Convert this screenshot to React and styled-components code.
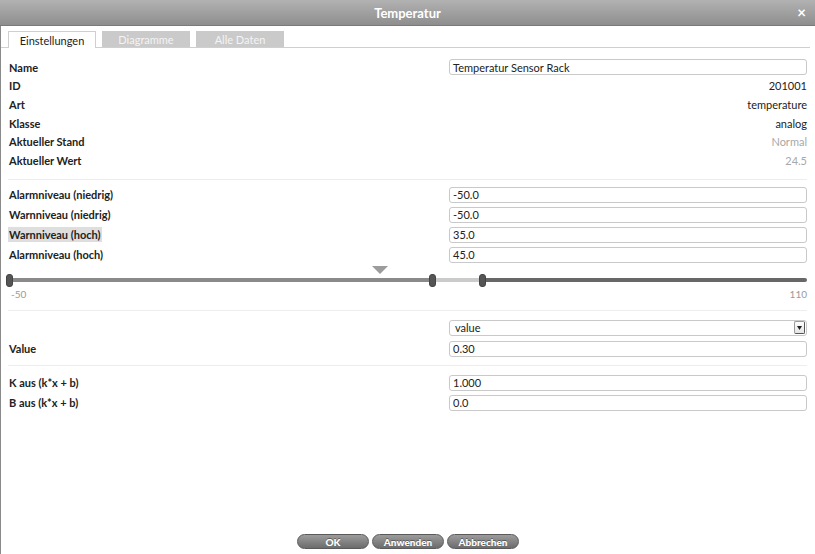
import React from 'react';
import styled, { createGlobalStyle } from 'styled-components';

const GlobalStyle = createGlobalStyle`
  html, body {
    margin: 0;
    padding: 0;
    background: #fff;
  }
  body {
    font-family: Lato, "Open Sans", "Liberation Sans", sans-serif;
    font-size: 11px;
    color: #222;
  }
`;

const Dialog = styled.div`
  width: 815px;
  height: 554px;
  display: flex;
  flex-direction: column;
  background: #fff;
  overflow: hidden;
`;

const TitleBar = styled.div`
  height: 26px;
  flex: none;
  display: flex;
  align-items: center;
  justify-content: center;
  position: relative;
  background: linear-gradient(#b2b2b2, #8e8e8e);
  border-bottom: 1px solid #7a7a7a;
  box-sizing: border-box;
  color: #fff;
  font-weight: 700;
  font-size: 13px;
`;

const Close = styled.span`
  position: absolute;
  right: 9px;
  top: 5px;
  font-size: 15px;
  font-weight: 700;
  line-height: 15px;
`;

const Body = styled.div`
  flex: 1;
  display: flex;
  flex-direction: column;
  border-left: 1px solid #8a8a8a;
`;

const TabBar = styled.div`
  display: flex;
  gap: 6px;
  margin-top: 5px;
  padding-left: 7px;
  margin-right: 5px;
  border-bottom: 1px solid #cfcfcf;
`;

const Tab = styled.div`
  width: 88px;
  display: flex;
  align-items: center;
  justify-content: center;
  font-size: 11px;
  box-sizing: border-box;
  background: ${p => (p.$active ? '#fff' : '#cacaca')};
  color: ${p => (p.$active ? '#222' : '#f4f4f4')};
  border: ${p => (p.$active ? '1px solid #cfcfcf' : 'none')};
  border-bottom: none;
  margin-bottom: ${p => (p.$active ? '-1px' : '0')};
  height: ${p => (p.$active ? '17px' : '16px')};
`;

const Content = styled.div`
  padding: 10px 8px 0 7px;
  display: flex;
  flex-direction: column;
`;

const Row = styled.div`
  display: grid;
  grid-template-columns: 1fr 358px;
  align-items: center;
  height: ${p => p.$h || 18.6}px;
`;

const Label = styled.span`
  font-weight: 700;
  justify-self: start;
  padding: 1px 1px;
  background: ${p => (p.$marked ? '#dedede' : 'transparent')};
`;

const Value = styled.span`
  justify-self: end;
  color: ${p => (p.$muted ? '#a8a8a8' : '#222')};
`;

const Input = styled.div`
  height: 16px;
  box-sizing: border-box;
  border: 1px solid #c9c9c9;
  border-radius: 3px;
  padding: 0 3px;
  display: flex;
  align-items: center;
  font-size: 11px;
  color: #222;
`;

const Select = styled(Input)`
  justify-content: space-between;
  padding: 0 1px 0 5px;
`;

const SelectButton = styled.span`
  width: 11px;
  height: 13px;
  border: 1px solid #9a9a9a;
  border-right-color: #555;
  border-bottom-color: #555;
  border-radius: 2px;
  box-sizing: border-box;
  display: flex;
  align-items: center;
  justify-content: center;
  background: linear-gradient(#fff, #e4e4e4);
`;

const Separator = styled.div`
  height: 1px;
  background: #ededed;
  margin: ${p => p.$m || '9px 0 5px'};
`;

const Slider = styled.div`
  position: relative;
  height: 35px;
`;

const Marker = styled.div`
  position: absolute;
  top: 1px;
  width: 0;
  height: 0;
  margin-left: -8px;
  border-left: 8px solid transparent;
  border-right: 8px solid transparent;
  border-top: 8px solid #9c9c9c;
`;

const Track = styled.div`
  position: absolute;
  left: 1px;
  right: 0;
  top: 13px;
  height: 4px;
  display: flex;
  border-radius: 2px;
  overflow: hidden;
`;

const Segment = styled.div`
  height: 100%;
  background: ${p => p.$color};
`;

const Handle = styled.div`
  position: absolute;
  top: 9px;
  width: 7px;
  height: 13px;
  margin-left: -3px;
  border-radius: 3px;
  background: #555;
  border: 1px solid #444;
  box-sizing: border-box;
`;

const ScaleLabel = styled.span`
  position: absolute;
  top: 23px;
  font-size: 10px;
  color: #9a9a9a;
  ${p => (p.$right ? 'right: 0;' : 'left: 3px;')}
`;

const Footer = styled.div`
  margin-top: auto;
  display: flex;
  justify-content: center;
  gap: 3px;
  padding: 0 0 5px 0;
`;

const Button = styled.div`
  width: 72px;
  height: 15px;
  box-sizing: border-box;
  border-radius: 8px;
  border: 1px solid #5a5a5a;
  background: linear-gradient(#9c9c9c, #6c6c6c);
  color: #fff;
  font-size: 10px;
  font-weight: 900;
  display: flex;
  align-items: center;
  justify-content: center;
  text-shadow: 0 -1px 0 rgba(0, 0, 0, 0.35);
`;

const MIN = -50;
const MAX = 110;
const pct = v => ((v - MIN) / (MAX - MIN)) * 100;

const info = [
  { label: 'ID', value: '201001' },
  { label: 'Art', value: 'temperature' },
  { label: 'Klasse', value: 'analog' },
  { label: 'Aktueller Stand', value: 'Normal', muted: true },
  { label: 'Aktueller Wert', value: '24.5', muted: true },
];

const levels = [
  { label: 'Alarmniveau (niedrig)', value: '-50.0' },
  { label: 'Warnniveau (niedrig)', value: '-50.0' },
  { label: 'Warnniveau (hoch)', value: '35.0', marked: true },
  { label: 'Alarmniveau (hoch)', value: '45.0' },
];

export default function App() {
  const current = 24.5;
  const warnHigh = 35;
  const alarmHigh = 45;
  return (
    <>
      <GlobalStyle />
      <Dialog>
        <TitleBar>
          Temperatur
          <Close>×</Close>
        </TitleBar>
        <Body>
          <TabBar>
            <Tab $active>Einstellungen</Tab>
            <Tab>Diagramme</Tab>
            <Tab>Alle Daten</Tab>
          </TabBar>
          <Content>
            <Row>
              <Label>Name</Label>
              <Input>Temperatur Sensor Rack</Input>
            </Row>
            {info.map(r => (
              <Row key={r.label}>
                <Label>{r.label}</Label>
                <Value $muted={r.muted}>{r.value}</Value>
              </Row>
            ))}
            <Separator />
            {levels.map(r => (
              <Row key={r.label} $h={20}>
                <Label $marked={r.marked}>{r.label}</Label>
                <Input>{r.value}</Input>
              </Row>
            ))}
            <Slider>
              <Marker style={{ left: `${pct(current)}%` }} />
              <Track>
                <Segment $color="#8a8a8a" style={{ width: `${pct(warnHigh)}%` }} />
                <Segment $color="#cbcbcb" style={{ width: `${pct(alarmHigh) - pct(warnHigh)}%` }} />
                <Segment $color="#676767" style={{ flex: 1 }} />
              </Track>
              <Handle style={{ left: '1px' }} />
              <Handle style={{ left: `${pct(warnHigh)}%` }} />
              <Handle style={{ left: `${pct(alarmHigh)}%` }} />
              <ScaleLabel>-50</ScaleLabel>
              <ScaleLabel $right>110</ScaleLabel>
            </Slider>
            <Separator $m="10px 0 6px" />
            <Row $h={22}>
              <span />
              <Select>
                value
                <SelectButton>
                  <svg width="5" height="4" viewBox="0 0 5 4">
                    <path d="M0 0 L5 0 L2.5 4 Z" fill="#222" />
                  </svg>
                </SelectButton>
              </Select>
            </Row>
            <Row $h={20}>
              <Label>Value</Label>
              <Input>0.30</Input>
            </Row>
            <Separator $m="6px 0 7px" />
            <Row $h={20}>
              <Label>K aus (k*x + b)</Label>
              <Input>1.000</Input>
            </Row>
            <Row $h={20}>
              <Label>B aus (k*x + b)</Label>
              <Input>0.0</Input>
            </Row>
          </Content>
          <Footer>
            <Button>OK</Button>
            <Button>Anwenden</Button>
            <Button>Abbrechen</Button>
          </Footer>
        </Body>
      </Dialog>
    </>
  );
}
